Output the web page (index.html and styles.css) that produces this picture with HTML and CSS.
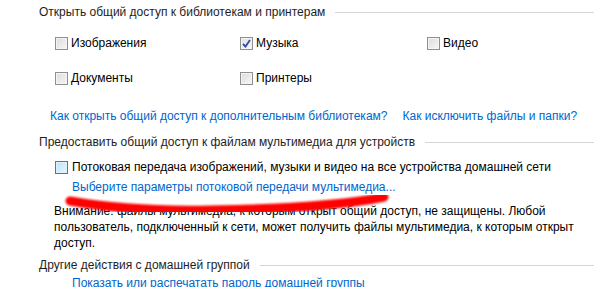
FILE: index.html
```html
<!DOCTYPE html>
<html lang="ru">
<head>
    <meta charset="UTF-8">
    <title>Домашняя группа</title>
    <link rel="stylesheet" href="styles.css">
</head>
<body>

    <div class="panel">
        <div class="group-title">
            <span>Открыть общий доступ к библиотекам и принтерам</span>
            <div class="rule"></div>
        </div>

        <div class="libs">
            <label class="check"><span class="box"></span>Изображения</label>
            <label class="check"><span class="box checked">
                <svg width="9" height="9" viewBox="0 0 9 9"><path d="M1 5 L3.5 7.5 L8 1" fill="none" stroke="#2a4fa8" stroke-width="1.8"/></svg>
            </span>Музыка</label>
            <label class="check"><span class="box"></span>Видео</label>
            <label class="check"><span class="box"></span>Документы</label>
            <label class="check"><span class="box"></span>Принтеры</label>
        </div>

        <div class="help-links">
            <a href="#">Как открыть общий доступ к дополнительным библиотекам?</a>
            <a href="#">Как исключить файлы и папки?</a>
        </div>

        <div class="group-title">
            <span>Предоставить общий доступ к файлам мультимедиа для устройств</span>
            <div class="rule"></div>
        </div>

        <label class="check stream"><span class="box hot"></span>Потоковая передача изображений, музыки и видео на все устройства домашней сети</label>
        <a class="sub-link" href="#">Выберите параметры потоковой передачи мультимедиа...</a>

        <p class="note">Внимание: файлы мультимедиа, к которым открыт общий доступ, не защищены. Любой пользователь, подключенный к сети, может получить файлы мультимедиа, к которым открыт доступ.</p>

        <div class="group-title">
            <span>Другие действия с домашней группой</span>
            <div class="rule"></div>
        </div>

        <a class="sub-link last" href="#">Показать или распечатать пароль домашней группы</a>
    </div>

    <!-- red marker scribble over the warning text -->
    <svg class="scribble" width="400" height="40" viewBox="0 0 400 40">
        <defs>
            <filter id="soft"><feGaussianBlur stdDeviation="1.3"/></filter>
        </defs>
        <path d="M70 13 C 110 20, 160 23, 210 22 C 280 21, 340 18, 384 9"
              fill="none" stroke="#ff0000" stroke-width="9" stroke-linecap="round" filter="url(#soft)"/>
    </svg>

</body>
</html>
```

FILE: styles.css
```css
/* General page */
body {
    margin: 0;
    background: #fff;
    font-family: "Liberation Sans", Arial, sans-serif;
    font-size: 12px;
    line-height: 16px;
    color: #000;
    overflow: hidden;
}

.panel {
    padding: 4px 0 0 39px;
}

/* Section title with a line to the right */
.group-title {
    display: flex;
    align-items: center;
    color: #1e1e1e;
}

.group-title span {
    white-space: nowrap;
}

.group-title .rule {
    flex: 1;
    height: 1px;
    background: #d5d5d5;
    margin-left: 10px;
}

/* Checkbox grid */
.libs {
    display: grid;
    grid-template-columns: 185px 187px 120px;
    row-gap: 19px;
    margin: 15px 0 0 16px;
}

.check {
    display: flex;
    align-items: center;
    white-space: nowrap;
}

.box {
    width: 11px;
    height: 11px;
    border: 1px solid #8e8f8f;
    background: linear-gradient(135deg, #dcdcdc, #f6f6f6);
    box-shadow: inset 0 0 0 1px #f4f4f4;
    margin-right: 3px;
    display: flex;
    align-items: center;
    justify-content: center;
}

.box.checked {
    background: linear-gradient(135deg, #e0e0e0, #f8f8f8);
}

.box.hot {
    border-color: #3c7fb1;
    background: linear-gradient(135deg, #b9e2fc, #eaf6fd);
    box-shadow: inset 0 0 0 1px #def2fd;
    margin-right: 4px;
}

/* Links */
a {
    color: #0066cc;
    text-decoration: none;
}

.help-links {
    display: flex;
    gap: 15px;
    margin: 22px 0 10px 11px;
}

.stream {
    margin: 9px 0 0 16px;
}

.sub-link {
    display: block;
    margin: 4px 0 0 33px;
}

.sub-link.last {
    margin-top: 2px;
}

.note {
    margin: 8px 0 6px 15px;
    width: 535px;
}

.scribble {
    position: absolute;
    left: 0;
    top: 188px;
}
```
